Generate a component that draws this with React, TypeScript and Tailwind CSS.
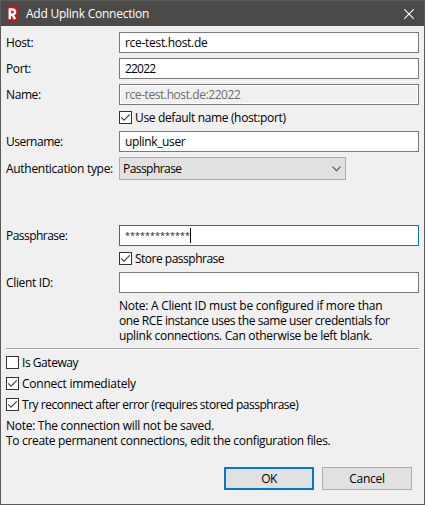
import type { ReactNode } from "react";

function Check({ checked = false, label, track = "tracking-[-0.25px]" }: { checked?: boolean; label: string; track?: string }) {
  return (
    <div className="flex h-[13px] items-center">
      <span className="mr-[3px] h-[13px] w-[13px] shrink-0 border border-[#333] bg-white">
        {checked && (
          <svg width="11" height="11" viewBox="0 0 11 11" fill="none" stroke="#444" strokeWidth="1.2">
            <path d="M1.2 5.3 L4 8.1 L9.8 2.3" />
          </svg>
        )}
      </span>
      <span className={`leading-[15px] ${track}`}>{label}</span>
    </div>
  );
}

function Row({ label, track = "tracking-[-0.4px]", children }: { label: string; track?: string; children: ReactNode }) {
  return (
    <div className="flex items-center">
      <span className={`w-[113px] shrink-0 ${track}`}>{label}</span>
      {children}
    </div>
  );
}

function Field({ children, look = "border-[#7a7a7a]" }: { children?: ReactNode; look?: string }) {
  return <div className={`flex h-[21px] w-[300px] items-center border bg-white pl-[5px] ${look}`}>{children}</div>;
}

export default function App() {
  return (
    <div className="flex h-[505px] w-[425px] flex-col overflow-hidden border border-t-0 border-[#5a5a5a] bg-[#f0f0f0] font-['Open_Sans','Noto_Sans',sans-serif] text-[12px] leading-[15px] whitespace-nowrap text-black">
      <div className="-mx-px flex h-[26px] shrink-0 items-center border-t border-[#5a5a5a] bg-[#4b4a48] pr-[11px] pl-[7px] text-white">
        <svg width="11" height="16" viewBox="0 0 11 16" className="mr-[8px]">
          <rect width="11" height="16" rx="1.5" fill="#c4161c" />
          <path d="M2.8 13.2V3.6H5.4C8.9 3.6 8.9 8.5 5.4 8.5H3M5.5 8.5L8 13.2" fill="none" stroke="#fff" strokeWidth="2.5" />
        </svg>
        <span className="grow tracking-[-0.24px]">Add Uplink Connection</span>
        <svg width="10" height="10" viewBox="0 0 10 10" stroke="#fff" strokeWidth="1.1">
          <path d="M0.3 0.3L9.7 9.7M9.7 0.3L0.3 9.7" />
        </svg>
      </div>
      <div className="flex flex-col pt-[6px] pl-[5px]">
        <Row label="Host:"><Field><span className="tracking-[-0.3px]">rce-test.host.de</span></Field></Row>
        <div className="h-[5px]" />
        <Row label="Port:"><Field><span className="tracking-[-0.8px]">22022</span></Field></Row>
        <div className="h-[5px]" />
        <Row label="Name:">
          <div className="h-[21px] w-[300px] border border-[#7a7a7a] bg-white p-px">
            <div className="flex h-full items-center bg-[#f0f0f0] pl-[4px] tracking-[-0.42px] text-[#6d6d6d]">rce-test.host.de:22022</div>
          </div>
        </Row>
        <div className="mt-[6px] mb-[7px] pl-[113px]"><Check checked label="Use default name (host:port)" track="tracking-[-0.35px]" /></div>
        <Row label="Username:" track="tracking-[-0.5px]"><Field><span className="tracking-[-0.37px]">uplink_user</span></Field></Row>
        <div className="h-[5px]" />
        <Row label="Authentication type:" track="tracking-[-0.3px]">
          <div className="flex h-[23px] w-[227px] items-center justify-between border border-[#adadad] bg-[#e1e1e1] pr-[4px] pl-[3px]">
            <span className="tracking-[-0.55px]">Passphrase</span>
            <svg width="9" height="6" viewBox="0 0 9 6" fill="none" stroke="#555" strokeWidth="1.2"><path d="M0.5 0.7L4.5 4.7L8.5 0.7" /></svg>
          </div>
        </Row>
        <div className="h-[45px]" />
        <Row label="Passphrase:" track="tracking-[-0.53px]">
          <Field look="border-[#0078d7]">
            <span className="text-[9px] tracking-[0.04px] text-[#222]">*************</span>
            <span className="h-[15px] w-px bg-black" />
          </Field>
        </Row>
        <div className="mt-[6px] mb-[7px] pl-[113px]"><Check checked label="Store passphrase" track="tracking-[-0.5px]" /></div>
        <Row label="Client ID:" track="tracking-[-0.35px]"><Field /></Row>
        <div className="mt-[5px] pl-[113px]">
          <div className="tracking-[-0.25px]">Note: A Client ID must be configured if more than</div>
          <div className="tracking-[-0.41px]">one RCE instance uses the same user credentials for</div>
          <div className="tracking-[-0.29px]">uplink connections. Can otherwise be left blank.</div>
        </div>
        <div className="mt-[5px] h-[2px] w-[413px] border-t border-b border-t-[#a0a0a0] border-b-white" />
        <div className="mt-[6px] flex flex-col gap-[8px]">
          <Check label="Is Gateway" track="tracking-[-0.45px]" />
          <Check checked label="Connect immediately" />
          <Check checked label="Try reconnect after error (requires stored passphrase)" track="tracking-[-0.47px]" />
        </div>
        <div className="mt-[7px]">
          <div className="tracking-[-0.28px]">Note: The connection will not be saved.</div>
          <div className="tracking-[-0.32px]">To create permanent connections, edit the configuration files.</div>
        </div>
        <div className="mt-[19px] flex gap-[8px] pl-[218px] text-center leading-[21px] tracking-[-0.25px]">
          <div className="h-[23px] w-[90px] border-2 border-[#0078d7] bg-[#e1e1e1] leading-[19px] tracking-[-0.7px]">OK</div>
          <div className="h-[23px] w-[90px] border border-[#adadad] bg-[#e1e1e1]">Cancel</div>
        </div>
      </div>
    </div>
  );
}
